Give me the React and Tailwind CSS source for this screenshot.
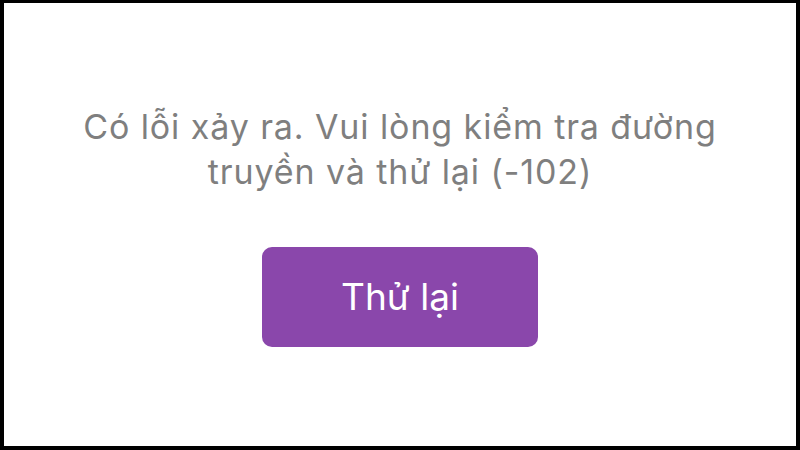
export default function App() {
  return (
    <div className="w-[800px] h-[450px] bg-black pt-[3px] px-[4px] pb-[4px]">
      <div className="w-full h-full bg-white flex flex-col items-center pt-[101px]">
        <p className="text-[34px] leading-[45px] tracking-[0.9px] text-[#7f7f7f] text-center font-['Inter',sans-serif]">
          Có lỗi xảy ra. Vui lòng kiểm tra đường
          <br />
          truyền và thử lại (-102)
        </p>
        <button className="mt-[53px] w-[276px] h-[100px] rounded-[10px] bg-[#8a47ab] text-white text-[37px] font-['Inter',sans-serif] flex items-center justify-center">
          Thử lại
        </button>
      </div>
    </div>
  );
}
